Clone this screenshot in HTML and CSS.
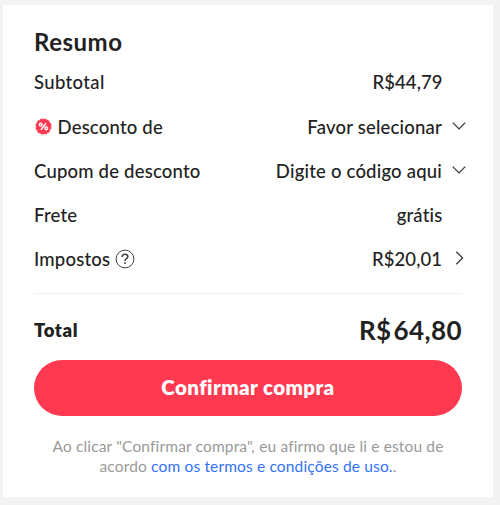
FILE: index.html
```
<!DOCTYPE html>
<html lang="pt-BR">
<head>
<meta charset="UTF-8" />
<meta name="viewport" content="width=device-width, initial-scale=1" />
<title>Resumo</title>
<link rel="stylesheet" href="styles.css">
</head>
<body>
  <main class="summary">
    <h1>Resumo</h1>

    <div class="row">
      <span class="label subtotal">Subtotal</span>
      <span class="value price">R$44,79</span>
    </div>
    <div class="row">
      <svg class="badge" viewBox="0 0 16 16" aria-hidden="true">
        <circle cx="8" cy="8" r="7" fill="#ff394f" />
        <circle cx="8" cy="8" r="7.1" fill="none" stroke="#ff394f" stroke-width="1" stroke-dasharray="2.7 1.017" />
        <g fill="none" stroke="#fff" stroke-width="1.3">
          <circle cx="5.4" cy="6.3" r="1.3" />
          <circle cx="10.6" cy="9.7" r="1.3" />
          <path d="M10.4 4.9L5.6 11.1" />
        </g>
      </svg>
      <span class="label">Desconto de</span>
      <span class="value">Favor selecionar</span>
      <svg class="arrow" viewBox="0 0 14 14"><path d="M.8 2.7L7 8.9l6.2-6.2" /></svg>
    </div>
    <div class="row">
      <span class="label">Cupom de desconto</span>
      <span class="value">Digite o código aqui</span>
      <svg class="arrow" viewBox="0 0 14 14"><path d="M.8 2.7L7 8.9l6.2-6.2" /></svg>
    </div>
    <div class="row">
      <span class="label">Frete</span>
      <span class="value">grátis</span>
    </div>
    <div class="row">
      <span class="label">Impostos</span>
      <svg class="help" viewBox="0 0 20 20" aria-hidden="true">
        <circle cx="10" cy="10" r="8.9" stroke-width="1" />
        <path d="M7.2 8C7.2 6.2 8.4 5.2 10 5.2s2.8 1 2.8 2.5c0 2-2.8 2-2.8 4.3M10 13.3v1.7" stroke-width="1.6" />
      </svg>
      <span class="value price">R$20,01</span>
      <svg class="arrow" viewBox="0 0 14 14"><path d="M4.3 -.2l6.3 6.2-6.3 6.2" /></svg>
    </div>

    <div class="total">
      <span class="total-label">Total</span>
      <span class="total-value"><span class="currency">R$</span>64,80</span>
    </div>

    <button type="button">Confirmar compra</button>

    <p class="terms">
      Ao clicar "Confirmar compra", eu afirmo que li e estou de<br>
      acordo <a href="#">com os termos e condições de uso.</a>.
    </p>
  </main>
</body>
</html>
```

FILE: styles.css
```
* {
  box-sizing: border-box;
  margin: 0;
  padding: 0;
}
body {
  padding: 5px 7px 8px 3px;
  background: #f3f3f3;
  font-family: Lato, "Open Sans", sans-serif;
  color: #222;
}

.summary {
  height: 492px;
  padding: 21px 31px 0;
  background: #fff;
}
h1 {
  height: 34.3px;
  font-size: 24px;
  line-height: 32px;
  font-weight: 700;
  letter-spacing: 0.5px;
}

/* --- Price rows --- */
.row {
  display: flex;
  align-items: center;
  height: 44.25px;
  margin-right: -4px;
  font-size: 18.5px;
  line-height: 24px;
  font-weight: 500;
  letter-spacing: 0.2px;
  white-space: nowrap;
}
.subtotal {
  letter-spacing: 0.35px;
}
.value {
  margin-left: auto;
  margin-right: 23.5px;
}
.price {
  letter-spacing: 0.05px;
}
.badge {
  width: 17px;
  height: 17px;
  margin-left: 0.5px;
  margin-right: 6px;
}
.help {
  width: 20px;
  height: 20px;
  margin-left: 5px;
  fill: none;
  stroke: #444;
}
.arrow {
  width: 14px;
  height: 14px;
  margin-left: -13.5px;
  overflow: visible;
  fill: none;
  stroke: #333;
  stroke-width: 1.2;
}

/* --- Total --- */
.total {
  display: flex;
  align-items: center;
  justify-content: space-between;
  height: 67px;
  margin-top: 11px;
  padding-top: 6px;
  border-top: 1px solid #eee;
}
.total-label {
  font-size: 18.5px;
  font-weight: 800;
  letter-spacing: 0.6px;
}
.total-value {
  font-size: 26px;
  font-weight: 700;
  letter-spacing: 0.4px;
}
.currency {
  margin-right: 2px;
}

/* --- Confirm button --- */
button {
  display: block;
  width: 100%;
  height: 56.5px;
  padding-bottom: 2px;
  border: none;
  border-radius: 29px;
  background: #ff394f;
  color: #fff;
  font-family: inherit;
  font-size: 20.5px;
  font-weight: 800;
  letter-spacing: 0.4px;
}

.terms {
  margin: 19.5px -10px 0;
  color: #999;
  font-size: 15.5px;
  line-height: 20px;
  letter-spacing: 0.15px;
  text-align: center;
  white-space: nowrap;
}
.terms a {
  color: #3272f4;
  text-decoration: none;
}
```
